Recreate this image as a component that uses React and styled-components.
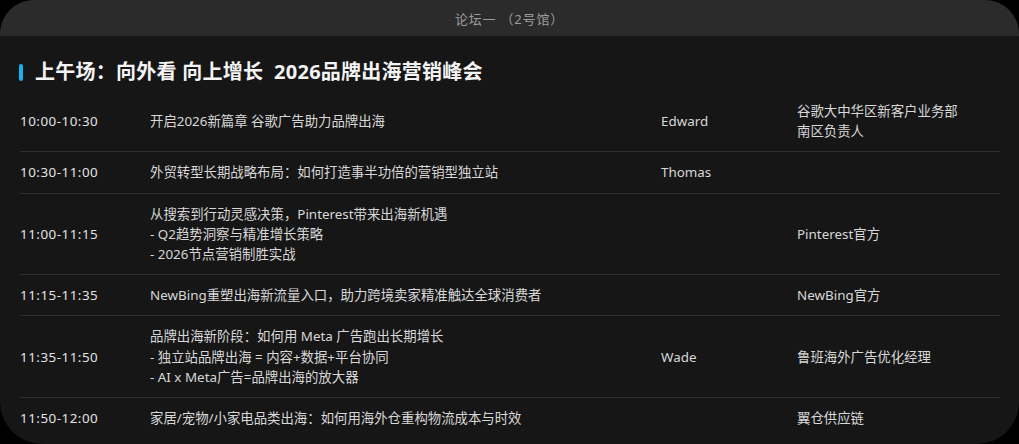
import React from 'react';
import styled, { createGlobalStyle } from 'styled-components';

const sessions = [
  {
    time: '10:00-10:30',
    topic: ['开启2026新篇章 谷歌广告助力品牌出海'],
    speaker: 'Edward',
    role: ['谷歌大中华区新客户业务部', '南区负责人'],
  },
  {
    time: '10:30-11:00',
    topic: ['外贸转型长期战略布局：如何打造事半功倍的营销型独立站'],
    speaker: 'Thomas',
    role: [],
  },
  {
    time: '11:00-11:15',
    topic: [
      '从搜索到行动灵感决策，Pinterest带来出海新机遇',
      '- Q2趋势洞察与精准增长策略',
      '- 2026节点营销制胜实战',
    ],
    speaker: '',
    role: ['Pinterest官方'],
  },
  {
    time: '11:15-11:35',
    topic: ['NewBing重塑出海新流量入口，助力跨境卖家精准触达全球消费者'],
    speaker: '',
    role: ['NewBing官方'],
  },
  {
    time: '11:35-11:50',
    topic: [
      '品牌出海新阶段：如何用 Meta 广告跑出长期增长',
      '- 独立站品牌出海 = 内容+数据+平台协同',
      '- AI x Meta广告=品牌出海的放大器',
    ],
    speaker: 'Wade',
    role: ['鲁班海外广告优化经理'],
  },
  {
    time: '11:50-12:00',
    topic: ['家居/宠物/小家电品类出海：如何用海外仓重构物流成本与时效'],
    speaker: '',
    role: ['翼仓供应链'],
  },
];

const App = () => {
  return (
    <>
      <GlobalStyle />
      <Card>
        <Header>论坛一 （2号馆）</Header>
        <Body>
          <SectionTitle>
            <Accent />
            <TitleText>上午场：向外看 向上增长&nbsp; 2026品牌出海营销峰会</TitleText>
          </SectionTitle>
          <Table>
            {sessions.map((s, i) => (
              <Row key={s.time} last={i === sessions.length - 1}>
                <TimeCell>{s.time}</TimeCell>
                <Cell>
                  {s.topic.map(line => (
                    <Line key={line}>{line}</Line>
                  ))}
                </Cell>
                <Cell>{s.speaker}</Cell>
                <Cell>
                  {s.role.map(line => (
                    <Line key={line}>{line}</Line>
                  ))}
                </Cell>
              </Row>
            ))}
          </Table>
        </Body>
      </Card>
    </>
  );
};

export default App;

const GlobalStyle = createGlobalStyle`
  html, body {
    margin: 0;
    padding: 0;
    background: #000;
  }
  body {
    font-family: "Noto Sans", "Noto Sans CJK SC", sans-serif;
    text-spacing-trim: space-all;
  }
`;

//Card shell
const Card = styled.div`
  width: 1019px;
  height: 444px;
  background: #161616;
  border-radius: 34px 34px 42px 42px;
  overflow: hidden;
  display: flex;
  flex-direction: column;
`;

const Header = styled.div`
  height: 36px;
  flex: none;
  background: #2b2b2b;
  color: #9c9c9c;
  font-size: 13px;
  letter-spacing: 0.8px;
  display: flex;
  align-items: center;
  justify-content: center;
  white-space: pre;
`;

const Body = styled.div`
  padding: 0 19px 0 20px;
`;

//Section heading
const SectionTitle = styled.div`
  display: flex;
  align-items: center;
  gap: 12px;
  padding-top: 22px;
  margin-bottom: 5px;
  margin-left: -1px;
`;

const Accent = styled.span`
  width: 4px;
  height: 17px;
  border-radius: 2px;
  background: #17b3e6;
`;

const TitleText = styled.h2`
  margin: 0;
  font-size: 20px;
  line-height: 28px;
  font-weight: 700;
  letter-spacing: 0.25px;
  color: #f4f4f4;
`;

//Schedule table
const Table = styled.div`
  display: flex;
  flex-direction: column;
`;

const Row = styled.div`
  display: grid;
  grid-template-columns: 130px 511px 136px 1fr;
  align-items: center;
  padding: 10px 0;
  border-bottom: ${p => (p.last ? 'none' : '1px solid #2e2e2e')};
  font-size: 13.4px;
  line-height: 20.2px;
  color: #d8d8d8;
`;

const Cell = styled.div`
  display: flex;
  flex-direction: column;
`;

const TimeCell = styled.div`
  color: #e2e2e2;
  letter-spacing: 0.5px;
`;

const Line = styled.span`
  white-space: nowrap;
`;
